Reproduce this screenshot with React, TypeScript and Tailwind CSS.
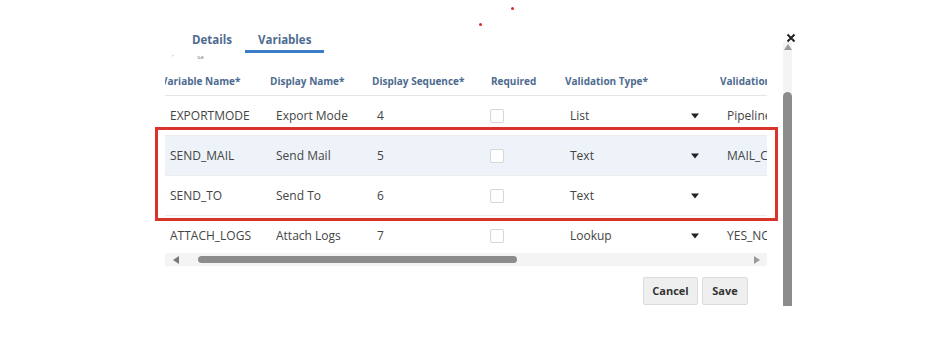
import React from "react";

type Row = {
  name: string;
  display: string;
  seq: string;
  type: string;
  validation: string;
  active?: boolean;
};

const rows: Row[] = [
  { name: "EXPORTMODE", display: "Export Mode", seq: "4", type: "List", validation: "Pipeline" },
  { name: "SEND_MAIL", display: "Send Mail", seq: "5", type: "Text", validation: "MAIL_C", active: true },
  { name: "SEND_TO", display: "Send To", seq: "6", type: "Text", validation: "" },
  { name: "ATTACH_LOGS", display: "Attach Logs", seq: "7", type: "Lookup", validation: "YES_NC" },
];

function Caret() {
  return (
    <svg width="8" height="6" viewBox="0 0 8 6" className="shrink-0">
      <path d="M0 0.5 L8 0.5 L4 5.5 Z" fill="#222" />
    </svg>
  );
}

export default function App() {
  return (
    <div className="relative w-[936px] h-[351px] bg-white overflow-hidden font-['Open_Sans',sans-serif]">
      {/* stray red dots */}
      <span className="absolute left-[479px] top-[23px] w-[3px] h-[3px] rounded-full bg-[#e02a20]" />
      <span className="absolute left-[511px] top-[7px] w-[3px] h-[3px] rounded-full bg-[#e02a20]" />

      <div className="flex pl-[162px] pt-[31px]">
        <div className="w-[606px] shrink-0 flex flex-col">
          {/* tabs */}
          <div className="flex ml-[17px]">
            <div className="px-[13px] pb-[1px] leading-[18px] border-b-[3px] border-transparent text-[11.5px] font-bold text-[#4d6b8f]">
              Details
            </div>
            <div className="px-[13px] pb-[1px] leading-[18px] border-b-[3px] border-[#3b7cc6] text-[11.5px] font-bold text-[#4d6b8f]">
              Variables
            </div>
          </div>
          <div className="h-[8px] flex items-center ml-[10px] gap-[24px] text-[6px] leading-[6px] text-[#777]">
            <span>'</span>
            <span>sa</span>
          </div>

          {/* table viewport */}
          <div className="ml-[3px] w-[602px] overflow-hidden">
            <div className="ml-[-3px] w-[700px]">
              <div className="h-[35px] pt-[7px] flex items-center border-b border-[#e6e6e6] w-[700px] text-[10px] font-bold text-[#4d6b8f] whitespace-nowrap">
                <div className="w-[108px] shrink-0 ml-[-1px]">Variable Name*</div>
                <div className="w-[102px] shrink-0 ml-[1px]">Display Name*</div>
                <div className="w-[119px] shrink-0">Display Sequence*</div>
                <div className="w-[74px] shrink-0">Required</div>
                <div className="w-[155px] shrink-0">Validation Type*</div>
                <div className="w-[100px] shrink-0">Validation</div>
              </div>

              {rows.map((r, i) => (
                <div
                  key={r.name}
                  className={
                    "flex items-center w-[700px] border-b text-[12px] text-[#444] whitespace-nowrap " +
                    (i === rows.length - 1 ? "h-[37px] pt-[3px] border-transparent " : "h-[40px] border-[#ececec] ") +
                    (r.active ? "bg-[#edf3f9]" : "")
                  }
                >
                  <div className="w-[108px] shrink-0 pl-[8px]">{r.name}</div>
                  <div className="w-[102px] shrink-0 pl-[6px]">{r.display}</div>
                  <div className="w-[119px] shrink-0 pl-[5px]">{r.seq}</div>
                  <div className="w-[74px] shrink-0">
                    <div className="ml-[-1px] w-[14px] h-[14px] rounded-[2px] border border-[#d6d6d6] bg-white" />
                  </div>
                  <div className="w-[155px] shrink-0 flex items-center pl-[5px] pr-[21px]">
                    <span>{r.type}</span>
                    <span className="ml-auto">
                      <Caret />
                    </span>
                  </div>
                  <div className="w-[100px] shrink-0 pl-[7px]">{r.validation}</div>
                </div>
              ))}
            </div>

            {/* horizontal scrollbar */}
            <div className="h-[13px] bg-[#f4f4f4] flex items-center pl-[8px] pr-[7px]">
              <svg width="6" height="8" viewBox="0 0 6 8">
                <path d="M6 0 L6 8 L0 4 Z" fill="#777" />
              </svg>
              <div className="ml-[19px] w-[319px] h-[7px] rounded-full bg-[#8c8c8c]" />
              <svg width="6" height="8" viewBox="0 0 6 8" className="ml-auto">
                <path d="M0 0 L0 8 L6 4 Z" fill="#9a9a9a" />
              </svg>
            </div>
          </div>

          {/* footer buttons */}
          <div className="mt-[11px] flex justify-end gap-[4px] pr-[20px]">
            <button className="h-[28px] w-[55px] rounded-[2px] border border-[#dcdcdc] bg-[#efefef] text-[11px] font-bold text-[#333]">
              Cancel
            </button>
            <button className="h-[28px] w-[46px] rounded-[2px] border border-[#dcdcdc] bg-[#efefef] text-[11px] font-bold text-[#333]">
              Save
            </button>
          </div>
        </div>

        {/* vertical scrollbar */}
        <div className="ml-[15px] mt-[11px] w-[9px] shrink-0 flex flex-col">
          <div className="h-[8px] bg-[#f4f4f4] flex items-end justify-center">
            <svg width="8" height="6" viewBox="0 0 8 6">
              <path d="M0 6 L8 6 L4 0 Z" fill="#9a9a9a" />
            </svg>
          </div>
          <div className="h-[42px] bg-[#f4f4f4]" />
          <div className="h-[214px] rounded-t-full bg-[#8c8c8c]" />
        </div>
      </div>

      {/* close button */}
      <svg className="absolute left-[786px] top-[33px]" width="10" height="10" viewBox="0 0 10 10">
        <path d="M1.5 1.5 L8.5 8.5 M8.5 1.5 L1.5 8.5" stroke="#222" strokeWidth="2" />
      </svg>

      {/* highlight around the edited rows */}
      <div className="absolute left-[155px] top-[127px] w-[623px] h-[94px] border-[3px] border-[#d8342b] pointer-events-none" />
    </div>
  );
}
